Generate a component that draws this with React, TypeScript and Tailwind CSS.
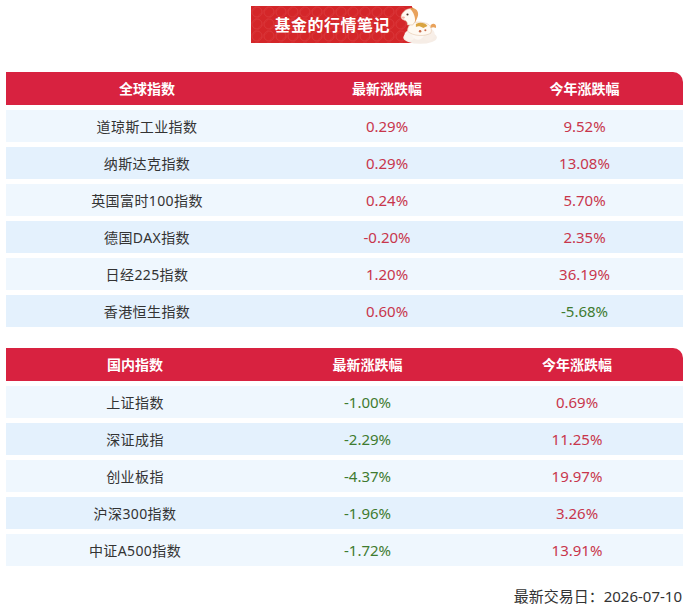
import React from 'react'

type Tone = 'up' | 'down'
type Row = { name: string; latest: string; lt: Tone; ytd: string; yt: Tone }

const GLOBAL: Row[] = [
  { name: '道琼斯工业指数', latest: '0.29%', lt: 'up', ytd: '9.52%', yt: 'up' },
  { name: '纳斯达克指数', latest: '0.29%', lt: 'up', ytd: '13.08%', yt: 'up' },
  { name: '英国富时100指数', latest: '0.24%', lt: 'up', ytd: '5.70%', yt: 'up' },
  { name: '德国DAX指数', latest: '-0.20%', lt: 'up', ytd: '2.35%', yt: 'up' },
  { name: '日经225指数', latest: '1.20%', lt: 'up', ytd: '36.19%', yt: 'up' },
  { name: '香港恒生指数', latest: '0.60%', lt: 'up', ytd: '-5.68%', yt: 'down' },
]

const DOMESTIC: Row[] = [
  { name: '上证指数', latest: '-1.00%', lt: 'down', ytd: '0.69%', yt: 'up' },
  { name: '深证成指', latest: '-2.29%', lt: 'down', ytd: '11.25%', yt: 'up' },
  { name: '创业板指', latest: '-4.37%', lt: 'down', ytd: '19.97%', yt: 'up' },
  { name: '沪深300指数', latest: '-1.96%', lt: 'down', ytd: '3.26%', yt: 'up' },
  { name: '中证A500指数', latest: '-1.72%', lt: 'down', ytd: '13.91%', yt: 'up' },
]

const toneClass = (t: Tone) => (t === 'down' ? 'text-[#3f7b30]' : 'text-[#c8364c]')

function Horse() {
  return (
    <svg width="42" height="40" viewBox="0 0 40 38" className="absolute right-0 top-0">
      {/* cloud */}
      <ellipse cx="22" cy="30" rx="16" ry="6" fill="#f6ede6" />
      <circle cx="12" cy="28" r="5" fill="#fbf4ee" />
      <circle cx="30" cy="27" r="6" fill="#f8efe8" />
      <circle cx="20" cy="26" r="6" fill="#fdf8f4" />
      {/* body */}
      <path d="M10 24 C10 16 18 14 26 16 C32 17 34 22 32 26 C26 29 16 29 10 24 Z" fill="#fff9f2" stroke="#e6c9b0" strokeWidth="0.6" />
      {/* saddle */}
      <path d="M18 17 C22 15 27 16 29 19 L25 21 C22 19 20 19 18 20 Z" fill="#d9a441" />
      <circle cx="22" cy="24" r="1.2" fill="#c96b4b" />
      <circle cx="27" cy="23" r="1" fill="#c96b4b" />
      {/* head */}
      <path d="M8 4 C13 1 19 3 19 9 C19 13 17 15 15 18 L10 18 C10 15 9 14 6 13 C3 12 3 8 8 4 Z" fill="#fffaf3" stroke="#e2c3a8" strokeWidth="0.6" />
      {/* mane */}
      <path d="M12 2 C17 1 21 4 20 9 C19 12 18 14 17 16 C18 11 16 6 12 2 Z" fill="#e9a25b" />
      <path d="M13 3 L15 1 L16 3 Z" fill="#d88b47" />
      <circle cx="10" cy="8" r="1" fill="#4a2e22" />
      <ellipse cx="6" cy="11" rx="1.6" ry="1" fill="#f3b6a7" />
      {/* tail */}
      <path d="M32 18 C36 15 38 18 37 21 C35 20 34 20 32 21 Z" fill="#e9a25b" />
    </svg>
  )
}

function Banner() {
  return (
    <div className="flex justify-center pt-[6px]">
      <div className="relative w-[188px] h-[38px]">
        <div className="w-[161px] h-[37px] bg-[#d42629] flex items-center pl-[24px] overflow-hidden relative">
          <svg className="absolute inset-0" width="161" height="37">
            <defs>
              <pattern id="p" width="12" height="12" patternUnits="userSpaceOnUse">
                <circle cx="6" cy="6" r="5" fill="none" stroke="#e0474a" strokeWidth="0.8" />
                <circle cx="0" cy="0" r="5" fill="none" stroke="#dc3b3f" strokeWidth="0.6" />
                <circle cx="12" cy="12" r="5" fill="none" stroke="#dc3b3f" strokeWidth="0.6" />
              </pattern>
            </defs>
            <rect width="161" height="37" fill="url(#p)" opacity="0.6" />
          </svg>
          <span className="relative text-white font-bold text-[16px] tracking-[0.5px]">基金的行情笔记</span>
        </div>
        <Horse />
      </div>
    </div>
  )
}

function Table({ head, rows, cols }: { head: string; rows: Row[]; cols: string }) {
  return (
    <div className="flex flex-col gap-[5px]">
      <div className={`grid ${cols} h-[33px] items-center bg-[#d82240] rounded-tr-[10px] text-white font-bold text-[14px] text-center`}>
        <div>{head}</div>
        <div>最新涨跌幅</div>
        <div>今年涨跌幅</div>
      </div>
      {rows.map((r, i) => (
        <div
          key={r.name}
          className={`grid ${cols} h-[32px] items-center text-center ${i % 2 === 0 ? 'bg-[#eff7fe]' : 'bg-[#e4f1fd]'}`}
        >
          <div className="text-[#333333] text-[14px] tracking-[0.4px]">{r.name}</div>
          <div className={`text-[15px] ${toneClass(r.lt)}`}>{r.latest}</div>
          <div className={`text-[15px] ${toneClass(r.yt)}`}>{r.ytd}</div>
        </div>
      ))}
    </div>
  )
}

export default function App() {
  return (
    <div
      className="w-[689px] h-[613px] bg-white overflow-hidden"
      style={{ fontFamily: '"Noto Sans", "Noto Sans CJK SC", sans-serif' }}
    >
      <Banner />

      <div className="px-[6px] mt-[28px]">
        <Table head="全球指数" rows={GLOBAL} cols="grid-cols-[282px_198px_197px]" />
        <div className="mt-[21px]">
          <Table head="国内指数" rows={DOMESTIC} cols="grid-cols-[258px_207px_212px]" />
        </div>
        <p className="mt-[20px] text-right pr-[1px] text-[15px] text-[#333333] leading-[20px]">
          最新交易日：2026-07-10
        </p>
      </div>
    </div>
  )
}
